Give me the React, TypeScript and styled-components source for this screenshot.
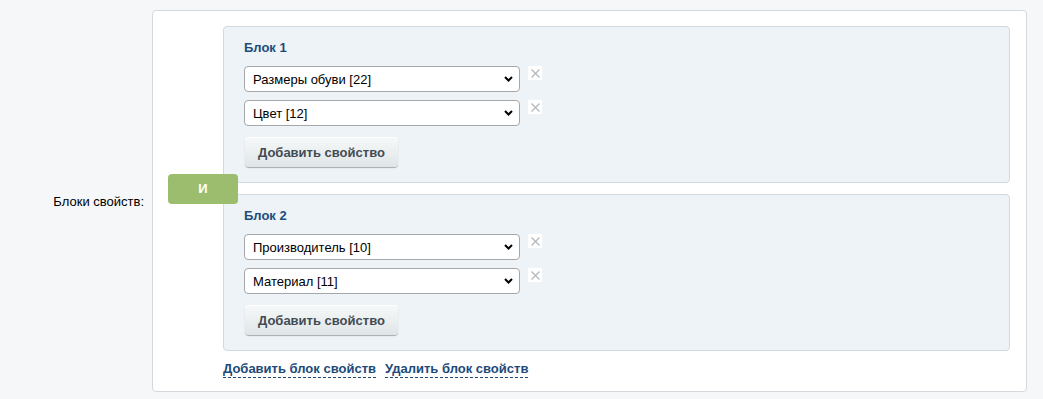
import styled, { createGlobalStyle } from "styled-components";

const GlobalStyle = createGlobalStyle`
  html, body {
    margin: 0;
    padding: 0;
    background: #f5f7f8;
    font-family: "Liberation Sans", Arial, sans-serif;
    font-size: 13px;
  }
`;

type Block = { title: string; props: string[] };

const blocks: Block[] = [
  { title: "Блок 1", props: ["Размеры обуви [22]", "Цвет [12]"] },
  { title: "Блок 2", props: ["Производитель [10]", "Материал [11]"] },
];

const Chevron = () => (
  <svg width="9" height="6" viewBox="0 0 9 6">
    <path d="M1 1 L4.5 4.5 L8 1" fill="none" stroke="#000" strokeWidth="2" />
  </svg>
);

const Cross = () => (
  <svg width="9" height="9" viewBox="0 0 9 9">
    <path d="M0.5 0.5 L8.5 8.5 M8.5 0.5 L0.5 8.5" stroke="#b3b6b9" strokeWidth="1.2" />
  </svg>
);

const App = () => {
  return (
    <>
      <GlobalStyle />
      <Page>
        <FieldRow>
          <Label>Блоки свойств:</Label>
          <Panel>
            <Blocks>
              {blocks.map((block, i) => (
                <div key={block.title}>
                  {i > 0 && (
                    <Separator>
                      <AndBadge>И</AndBadge>
                    </Separator>
                  )}
                  <BlockCard>
                    <BlockTitle>{block.title}</BlockTitle>
                    {block.props.map((p) => (
                      <PropRow key={p}>
                        <SelectWrap>
                          <Select defaultValue={p}>
                            <option>{p}</option>
                          </Select>
                          <Arrow>
                            <Chevron />
                          </Arrow>
                        </SelectWrap>
                        <RemoveBtn>
                          <Cross />
                        </RemoveBtn>
                      </PropRow>
                    ))}
                    <AddBtn>Добавить свойство</AddBtn>
                  </BlockCard>
                </div>
              ))}
            </Blocks>
            <Links>
              <DashedLink>Добавить блок свойств</DashedLink>
              <DashedLink>Удалить блок свойств</DashedLink>
            </Links>
          </Panel>
        </FieldRow>
      </Page>
    </>
  );
};

const Page = styled.div`
  width: 1043px;
  height: 399px;
  padding-top: 10px;
  box-sizing: border-box;
`;

const FieldRow = styled.div`
  display: flex;
  align-items: center;
`;

const Label = styled.div`
  width: 144px;
  padding-right: 8px;
  text-align: right;
  color: #000;
  font-size: 13px;
`;

const Panel = styled.div`
  width: 875px;
  height: 382px;
  box-sizing: border-box;
  background: #fff;
  border: 1px solid #d5d9dd;
  border-radius: 4px;
  padding: 15px 16px 0 70px;
`;

const Blocks = styled.div`
  display: flex;
  flex-direction: column;
`;

const Separator = styled.div`
  position: relative;
  height: 11px;
`;

const AndBadge = styled.div`
  position: absolute;
  left: -55px;
  top: 50%;
  transform: translateY(-50%);
  width: 70px;
  height: 30px;
  border-radius: 4px;
  background: #9dbd6e;
  color: #fff;
  font-weight: bold;
  font-size: 13px;
  display: flex;
  align-items: center;
  justify-content: center;
  z-index: 1;
`;

const BlockCard = styled.div`
  height: 157px;
  box-sizing: border-box;
  background: #edf3f6;
  border: 1px solid #d3dadf;
  border-radius: 4px;
  padding: 13px 20px 0;
`;

const BlockTitle = styled.div`
  font-weight: bold;
  color: #1d4c7c;
  font-size: 13px;
  line-height: 16px;
  margin-bottom: 10px;
`;

const PropRow = styled.div`
  display: flex;
  align-items: flex-start;
  gap: 8px;
  margin-bottom: 8px;
`;

const SelectWrap = styled.div`
  position: relative;
  width: 276px;
  height: 26px;
`;

const Select = styled.select`
  appearance: none;
  -webkit-appearance: none;
  width: 100%;
  height: 100%;
  box-sizing: border-box;
  border: 1px solid #a5a8ab;
  border-radius: 4px;
  background: #fff;
  padding: 0 24px 0 8px;
  font-family: "Liberation Sans", Arial, sans-serif;
  font-size: 13px;
  color: #000;
  outline: none;
`;

const Arrow = styled.span`
  position: absolute;
  right: 7px;
  top: 10px;
  display: flex;
  pointer-events: none;
`;

const RemoveBtn = styled.div`
  width: 14px;
  height: 14px;
  background: #fff;
  display: flex;
  align-items: center;
  justify-content: center;
  cursor: pointer;
`;

const AddBtn = styled.button`
  margin: 3px 0 0 1px;
  height: 30px;
  padding: 0 13px;
  border: none;
  border-radius: 4px;
  background: linear-gradient(to bottom, #f7f9f9, #dfe5e7);
  box-shadow: 0 1px 1px rgba(0, 0, 0, 0.3), inset 0 1px 0 #fff;
  font-family: "Liberation Sans", Arial, sans-serif;
  font-weight: bold;
  font-size: 13px;
  color: #434c55;
  cursor: pointer;
`;

const Links = styled.div`
  display: flex;
  gap: 9px;
  margin-top: 10px;
`;

const DashedLink = styled.span`
  font-weight: bold;
  font-size: 13px;
  line-height: 16px;
  color: #1c4a79;
  border-bottom: 1px dashed #1c4a79;
  cursor: pointer;
`;

export default App;
